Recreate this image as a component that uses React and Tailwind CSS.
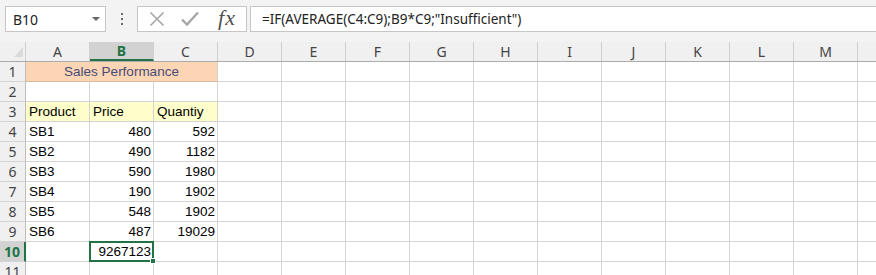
import React from "react";

const COLS = ["A","B","C","D","E","F","G","H","I","J","K","L","M","N"];
const DATA = {
  4: ["SB1", "480", "592"],
  5: ["SB2", "490", "1182"],
  6: ["SB3", "590", "1980"],
  7: ["SB4", "190", "1902"],
  8: ["SB5", "548", "1902"],
  9: ["SB6", "487", "19029"],
};

const grid = "border-r border-b border-[#d4d4d4]";
const cellBase = "w-[64px] shrink-0 h-full flex items-center pt-[1px] overflow-hidden whitespace-nowrap";

function RowHeader({ n, selected }) {
  return selected ? (
    <div className="w-[26px] shrink-0 h-full flex items-center justify-center bg-[#d2d2d2] border-b border-[#d4d4d4] border-r-2 border-r-[#217346] text-[#217346] font-bold text-[14px] font-['Noto_Sans',sans-serif]">
      {n}
    </div>
  ) : (
    <div className="w-[26px] shrink-0 h-full flex items-center justify-center bg-[#f0f0f0] border-b border-[#d4d4d4] border-r border-r-[#bdbdbd] text-[#444] text-[14px] font-['Noto_Sans',sans-serif]">
      {n}
    </div>
  );
}

function Cell({ children, right, bg, extra }) {
  return (
    <div className={`${cellBase} ${grid} ${right ? "justify-end pr-[2px]" : "pl-[3px]"} ${bg || ""} ${extra || ""}`}>
      {children}
    </div>
  );
}

function Row({ n }) {
  const cells = [];
  if (n === 1) {
    cells.push(
      <div key="m" className="w-[192px] shrink-0 h-full flex items-center justify-center pt-[1px] bg-[#fcd5b4] border-r border-[#d4d4d4] border-b border-b-[#d9b99d] text-[#474b78]">
        Sales Performance
      </div>
    );
    for (let i = 3; i < COLS.length; i++) cells.push(<Cell key={i} />);
  } else if (n === 3) {
    cells.push(<Cell key="a" bg="bg-[#ffffcc]">Product</Cell>);
    cells.push(<Cell key="b" bg="bg-[#ffffcc]">Price</Cell>);
    cells.push(<Cell key="c" bg="bg-[#ffffcc]">Quantiy</Cell>);
    for (let i = 3; i < COLS.length; i++) cells.push(<Cell key={i} />);
  } else if (DATA[n]) {
    const d = DATA[n];
    cells.push(<Cell key="a">{d[0]}</Cell>);
    cells.push(<Cell key="b" right>{d[1]}</Cell>);
    cells.push(<Cell key="c" right>{d[2]}</Cell>);
    for (let i = 3; i < COLS.length; i++) cells.push(<Cell key={i} />);
  } else if (n === 10) {
    cells.push(<Cell key="a" />);
    cells.push(
      <div key="b" className={`${cellBase} ${grid} justify-end pr-[2px] relative overflow-visible`}>
        9267123
        <div className="absolute -left-[1px] -top-[1px] -right-[1px] -bottom-[1px] border-2 border-[#217346]" />
        <div className="absolute -right-[3px] -bottom-[3px] w-[6px] h-[6px] bg-[#217346] border border-white" />
      </div>
    );
    for (let i = 2; i < COLS.length; i++) cells.push(<Cell key={i} />);
  } else {
    for (let i = 0; i < COLS.length; i++) cells.push(<Cell key={i} />);
  }
  return (
    <div className="flex h-[20px] text-[13.5px] text-black font-['Liberation_Sans',sans-serif]">
      <RowHeader n={n} selected={n === 10} />
      {cells}
    </div>
  );
}

export default function App() {
  return (
    <div className="w-[876px] h-[275px] overflow-hidden bg-[#f3f3f3] font-['Noto_Sans',sans-serif] select-none">
      {/* Formula bar area */}
      <div className="h-[42px] flex items-start pt-[6px]">
        <div className="ml-[5px] w-[101px] h-[26px] bg-white border border-[#c6c6c6] flex items-center pl-[7px] pr-[5px] shrink-0">
          <span className="text-[14px] text-[#222] flex-1">B10</span>
          <svg width="8" height="5" viewBox="0 0 8 5"><path d="M0 0 H8 L4 4 Z" fill="#666" /></svg>
        </div>
        <div className="w-[31px] h-[26px] flex flex-col items-center justify-center gap-[3px] shrink-0">
          <div className="w-[2px] h-[2px] bg-[#6b6b6b]" />
          <div className="w-[2px] h-[2px] bg-[#6b6b6b]" />
          <div className="w-[2px] h-[2px] bg-[#6b6b6b]" />
        </div>
        <div className="w-[110px] h-[26px] bg-white border border-[#c6c6c6] flex items-center shrink-0">
          <svg className="ml-[11px]" width="16" height="16" viewBox="0 0 16 16">
            <path d="M1.5 1.5 L14.5 14.5 M14.5 1.5 L1.5 14.5" stroke="#a6a6a6" strokeWidth="1.6" fill="none" />
          </svg>
          <svg className="ml-[16px]" width="18" height="16" viewBox="0 0 18 16">
            <path d="M1 8.5 L6 13.5 L17 1.5" stroke="#a6a6a6" strokeWidth="2.4" fill="none" />
          </svg>
          <span className="ml-[19px] text-[22px] leading-none text-[#505050] italic font-['Liberation_Serif',serif] -mt-[3px]">
            <span className="tracking-[1px]">f</span>x
          </span>
        </div>
        <div className="ml-[3px] flex-1 h-[26px] bg-white border border-r-0 border-[#c6c6c6] flex items-center pl-[11px]">
          <span className="text-[13.5px] text-[#222] whitespace-nowrap">=IF(AVERAGE(C4:C9);B9*C9;"Insufficient")</span>
        </div>
      </div>
      {/* Column header */}
      <div className="flex h-[20px] bg-[#f0f0f0] border-b border-[#ababab]">
        <div className="w-[26px] shrink-0 h-full relative border-r border-[#d0d0d0]">
          <svg className="absolute left-[14px] top-[5px]" width="9" height="10" viewBox="0 0 9 10">
            <path d="M9 0 V10 H0 Z" fill="#dadada" />
          </svg>
        </div>
        {COLS.map((c) =>
          c === "B" ? (
            <div key={c} className="w-[64px] shrink-0 h-full flex items-center justify-center bg-[#d2d2d2] border-r border-[#d0d0d0] border-b-2 border-b-[#217346] -mb-[1px] text-[14px] font-bold text-[#217346]">
              {c}
            </div>
          ) : (
            <div key={c} className="w-[64px] shrink-0 h-full flex items-center justify-center border-r border-[#d0d0d0] text-[14px] text-[#444]">
              {c === "N" ? "" : c}
            </div>
          )
        )}
      </div>
      <div className="bg-white">
        {[1,2,3,4,5,6,7,8,9,10,11].map((n) => (
          <Row key={n} n={n} />
        ))}
      </div>
    </div>
  );
}
